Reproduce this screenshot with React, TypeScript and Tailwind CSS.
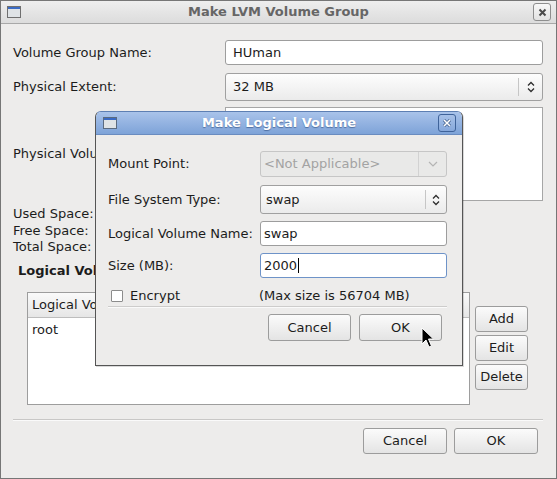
import React from "react";

const UpDown = ({ color = "#2e2e2e" }: { color?: string }) => (
  <svg width="8" height="12" viewBox="0 0 8 12">
    <path d="M1 4.5 L4 1.5 L7 4.5" fill="none" stroke={color} strokeWidth="1.3" />
    <path d="M1 7.5 L4 10.5 L7 7.5" fill="none" stroke={color} strokeWidth="1.3" />
  </svg>
);

const Down = () => (
  <svg width="10" height="6" viewBox="0 0 10 6">
    <path d="M1 1 L5 5 L9 1" fill="none" stroke="#b4b4b4" strokeWidth="1.2" />
  </svg>
);

const WinIcon = ({ dark }: { dark?: boolean }) => (
  <div
    className={`w-[14px] h-[12px] border ${dark ? "border-[#5b6b80]" : "border-[#6f6f6f]"} bg-[#dfe3e6] flex flex-col`}
  >
    <div className="h-[2px] bg-[#3b6bc4]" />
  </div>
);

const Btn = ({ label, cls }: { label: string; cls: string }) => (
  <div
    className={`${cls} flex items-center justify-center rounded-[3px] border border-[#9c9c9c] bg-gradient-to-b from-[#fbfbfb] to-[#e4e4e4] text-[#1c1c1c]`}
  >
    {label}
  </div>
);

export default function App() {
  return (
    <div className="w-[557px] h-[479px] relative overflow-hidden bg-[#edeceb] border border-[#767676] text-[13px] text-[#1c1c1c] [font-family:'DejaVu_Sans',sans-serif] flex flex-col">
      {/* Title bar */}
      <div className="h-[23px] shrink-0 border-b border-[#a8a8a8] bg-gradient-to-b from-[#eeeeee] to-[#dcdcdc] flex items-center relative px-[6px]">
        <WinIcon />
        <div className="absolute inset-0 flex items-center justify-center font-bold text-[#666666]">
          Make LVM Volume Group
        </div>
        <div className="ml-auto mr-[-1px] w-[18px] h-[18px] rounded-[3px] border border-[#8e8e8e] bg-gradient-to-b from-[#f8f8f8] to-[#e2e2e2] flex items-center justify-center relative">
          <svg width="9" height="9" viewBox="0 0 9 9">
            <path d="M1.5 1.5 L7.5 7.5 M7.5 1.5 L1.5 7.5" stroke="#4a4a4a" strokeWidth="2" />
          </svg>
        </div>
      </div>

      {/* Body */}
      <div className="flex-1 flex flex-col pt-[16px] pl-[12px] pr-[13px]">
        <div className="grid grid-cols-[212px_1fr] items-center">
          <div>Volume Group Name:</div>
          <div className="h-[25px] rounded-[3px] border border-[#9d9d9d] bg-white flex items-center pl-[7px]">
            HUman
          </div>
        </div>
        <div className="grid grid-cols-[212px_1fr] items-center mt-[8px]">
          <div>Physical Extent:</div>
          <div className="h-[28px] rounded-[3px] border border-[#a0a0a0] bg-gradient-to-b from-[#fdfdfd] to-[#ebebeb] flex items-center">
            <div className="flex-1 pl-[7px]">32 MB</div>
            <div className="w-px h-[18px] bg-[#c6c6c6]" />
            <div className="w-[23px] flex items-center justify-center">
              <UpDown />
            </div>
          </div>
        </div>
        <div className="grid grid-cols-[212px_1fr] items-center mt-[6px]">
          <div>Physical Volumes to Use:</div>
          <div className="h-[94px] border border-[#a6a6a6] bg-white" />
        </div>
        <div className="mt-[5px] leading-[16.5px]">
          <div>Used Space:</div>
          <div>Free Space:</div>
          <div>Total Space:</div>
        </div>
        <div className="mt-[7px] pl-[5px] font-bold leading-[16px]">Logical Volumes</div>
        <div className="mt-[13px] pl-[14px] flex">
          <div className="w-[443px] h-[113px] border border-[#9d9d9d] bg-white flex flex-col">
            <div className="h-[25px] border-b border-[#bdbdbd] bg-gradient-to-b from-[#fafafa] to-[#e6e6e6] flex items-center">
              <div className="w-[190px] pl-[4px] border-r border-[#c8c8c8]">Logical Volume Name</div>
              <div className="w-[140px] pl-[4px] border-r border-[#c8c8c8]">Mount Point</div>
              <div className="pl-[4px]">Size (MB)</div>
            </div>
            <div className="pl-[4px] pt-[2px]">root</div>
          </div>
          <div className="ml-[5px] mt-[14px] flex flex-col gap-[3px]">
            <Btn label="Add" cls="w-[53px] h-[26px]" />
            <Btn label="Edit" cls="w-[53px] h-[26px]" />
            <Btn label="Delete" cls="w-[53px] h-[26px]" />
          </div>
        </div>
        <div className="mt-[14px] h-px bg-[#c8c7c6] shadow-[0_1px_0_#fafafa]" />
        <div className="mt-[8px] flex justify-end gap-[7px] pr-[5px]">
          <Btn label="Cancel" cls="w-[84px] h-[26px]" />
          <Btn label="OK" cls="w-[84px] h-[26px]" />
        </div>
      </div>

      {/* Make Logical Volume dialog */}
      <div className="absolute left-[94px] top-[110px] w-[368px] h-[255px] flex flex-col rounded-t-[6px] border border-[#555555] border-t-[#5d7fb3] bg-[#edeceb] shadow-[1px_1px_0_rgba(0,0,0,0.15)]">
        <div className="h-[23px] shrink-0 rounded-t-[5px] bg-gradient-to-b from-[#a9c3ea] to-[#7ea3d8] border-b border-[#6a8cc0] flex items-center relative px-[7px]">
          <WinIcon dark />
          <div className="absolute inset-0 flex items-center justify-center font-bold text-white [text-shadow:0_1px_1px_rgba(40,70,120,0.6)]">
            Make Logical Volume
          </div>
          <div className="ml-auto mr-[-1px] w-[18px] h-[18px] rounded-[3px] border border-[#3f639a] bg-gradient-to-b from-[#a7c1e8] to-[#86a8db] flex items-center justify-center">
            <svg width="10" height="10" viewBox="0 0 10 10">
              <path d="M2 2 L8 8 M8 2 L2 8" stroke="#3d5b88" strokeWidth="3" />
              <path d="M2 2 L8 8 M8 2 L2 8" stroke="#ffffff" strokeWidth="1.6" />
            </svg>
          </div>
        </div>
        <div className="flex-1 flex flex-col pt-[16px] pl-[12px] pr-[15px]">
          <div className="grid grid-cols-[152px_1fr] items-center">
            <div>Mount Point:</div>
            <div className="h-[26px] rounded-[3px] border border-[#c6c6c6] bg-[#e9e9e8] flex items-center">
              <div className="flex-1 pl-[3px] text-[#a3a3a3]">&lt;Not Applicable&gt;</div>
              <div className="w-px h-[24px] bg-[#d2d2d2]" />
              <div className="w-[27px] flex items-center justify-center">
                <Down />
              </div>
            </div>
          </div>
          <div className="grid grid-cols-[152px_1fr] items-center mt-[8px]">
            <div>File System Type:</div>
            <div className="h-[29px] rounded-[3px] border border-[#a0a0a0] bg-gradient-to-b from-[#fdfdfd] to-[#ebebeb] flex items-center">
              <div className="flex-1 pl-[5px]">swap</div>
              <div className="w-px h-[19px] bg-[#c6c6c6]" />
              <div className="w-[20px] flex items-center justify-center">
                <UpDown />
              </div>
            </div>
          </div>
          <div className="grid grid-cols-[152px_1fr] items-center mt-[7px]">
            <div>Logical Volume Name:</div>
            <div className="h-[25px] rounded-[3px] border border-[#9d9d9d] bg-white flex items-center pl-[3px]">
              swap
            </div>
          </div>
          <div className="grid grid-cols-[152px_1fr] items-center mt-[7px]">
            <div>Size (MB):</div>
            <div className="h-[25px] rounded-[3px] border border-[#6e93c8] bg-white flex items-center pl-[3px]">
              2000
              <span className="inline-block w-px h-[15px] bg-black ml-px" />
            </div>
          </div>
          <div className="grid grid-cols-[152px_1fr] items-center mt-[8px] h-[16px]">
            <div className="flex items-center pl-[3px]">
              <div className="w-[12px] h-[12px] border border-[#8c8c8c] bg-white rounded-[1px]" />
              <span className="ml-[7px]">Encrypt</span>
            </div>
            <div className="ml-[-1px]">(Max size is 56704 MB)</div>
          </div>
          <div className="mt-[4px] h-px bg-[#cdcccb] shadow-[0_1px_0_#fafafa]" />
          <div className="mt-[7px] flex justify-end gap-[8px] pr-[5px]">
            <Btn label="Cancel" cls="w-[83px] h-[27px]" />
            <Btn label="OK" cls="w-[83px] h-[27px]" />
          </div>
        </div>
      </div>

      {/* Mouse cursor */}
      <svg
        className="absolute left-[420px] top-[326px]"
        width="14"
        height="22"
        viewBox="0 0 14 22"
      >
        <path
          d="M1 1 L1 17 L5 13 L8 20 L10.5 19 L7.5 12 L12.5 12 Z"
          fill="#000"
          stroke="#fff"
          strokeWidth="1"
          strokeLinejoin="round"
        />
      </svg>
    </div>
  );
}
